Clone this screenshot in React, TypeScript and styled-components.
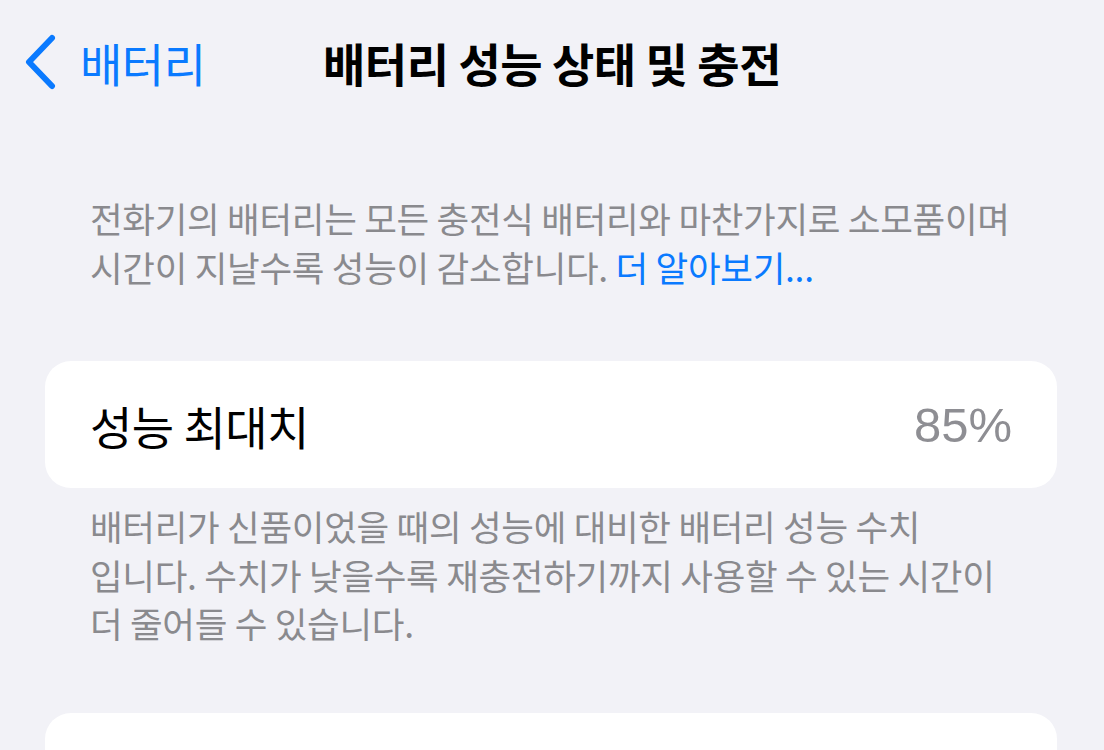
import styled, { createGlobalStyle } from "styled-components";

const GlobalStyle = createGlobalStyle`
  html, body {
    margin: 0;
    padding: 0;
    background: #f2f2f7;
  }
  body {
    font-family: "Noto Sans CJK KR", "Noto Sans", sans-serif;
    -webkit-font-smoothing: antialiased;
  }
`;

const Page = styled.div`
  width: 1104px;
  height: 750px;
  overflow: hidden;
  background: #f2f2f7;
  display: flex;
  flex-direction: column;

  & > * {
    flex-shrink: 0;
  }
`;

const NavBar = styled.header`
  height: 124px;
  display: grid;
  grid-template-columns: 1fr auto 1fr;
  align-items: center;
`;

const BackButton = styled.button`
  justify-self: start;
  display: flex;
  align-items: center;
  gap: 22px;
  margin-left: 22px;
  padding: 0;
  border: none;
  background: transparent;
  color: #0a7aff;
  font-family: inherit;
  font-size: 46px;
  font-weight: 400;
  letter-spacing: -0.5px;
`;

const Title = styled.h1`
  margin: 0;
  font-size: 46px;
  font-weight: 700;
  color: #000;
  letter-spacing: -0.5px;
`;

const Note = styled.p<{ $gap: number }>`
  margin: ${(p) => p.$gap}px 0 0;
  padding: 0 90px;
  font-size: 35.5px;
  line-height: 48.5px;
  color: #8a8a8e;
  letter-spacing: -0.3px;
`;

const Link = styled.a`
  color: #0a7aff;
  text-decoration: none;
`;

const Card = styled.section<{ $gap: number }>`
  margin: ${(p) => p.$gap}px 47px 0 45px;
  height: 127px;
  border-radius: 26px;
  background: #ffffff;
  display: flex;
  align-items: center;
  justify-content: space-between;
  padding: 0 45px;
`;

const Label = styled.span`
  font-size: 46px;
  color: #000;
  letter-spacing: -0.5px;
`;

const Value = styled.span`
  font-family: "Liberation Sans", "Noto Sans", sans-serif;
  font-size: 49px;
  color: #8e8e93;
`;

function Chevron() {
  return (
    <svg width="36" height="56" viewBox="0 0 36 56">
      <polyline
        points="30,4 7,28 30,52"
        fill="none"
        stroke="#0a7aff"
        strokeWidth="6"
        strokeLinecap="round"
        strokeLinejoin="round"
      />
    </svg>
  );
}

export default function App() {
  return (
    <Page>
      <GlobalStyle />
      <NavBar>
        <BackButton>
          <Chevron />
          배터리
        </BackButton>
        <Title>배터리 성능 상태 및 충전</Title>
        <div />
      </NavBar>
      <Note $gap={70}>
        전화기의 배터리는 모든 충전식 배터리와 마찬가지로 소모품이며
        <br />
        시간이 지날수록 성능이 감소합니다. <Link>더 알아보기...</Link>
      </Note>
      <Card $gap={70}>
        <Label>성능 최대치</Label>
        <Value>85%</Value>
      </Card>
      <Note $gap={14}>
        배터리가 신품이었을 때의 성능에 대비한 배터리 성능 수치
        <br />
        입니다. 수치가 낮을수록 재충전하기까지 사용할 수 있는 시간이
        <br />
        더 줄어들 수 있습니다.
      </Note>
      <Card $gap={65} />
    </Page>
  );
}
